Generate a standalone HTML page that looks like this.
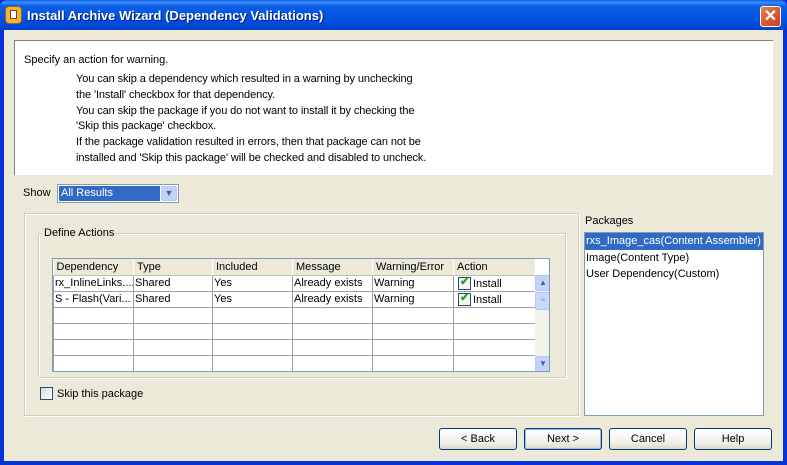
<!DOCTYPE html>
<html><head><style>
*{margin:0;padding:0;box-sizing:border-box}
body{width:787px;height:465px;position:relative;overflow:hidden;background:#0831d9;font-family:"Liberation Sans",Tahoma,sans-serif;font-size:11px;color:#000}
.a{position:absolute}
#title{left:0;top:0;width:787px;height:30px;background:linear-gradient(#0a5fe8 0%,#3d8cf7 8%,#0a5ee6 20%,#0253e0 60%,#0046d5 90%,#0341c8 100%);border-radius:7px 7px 0 0}
#body{left:4px;top:30px;width:779px;height:431px;background:#ece9d8}
.btn{position:absolute;top:428px;height:22px;width:78px;border:1px solid #003c74;border-radius:3px;background:linear-gradient(#fff,#f0efe8 70%,#dcd8c8);text-align:center;line-height:20px;font-size:11px}
.grp{border:1px solid #d0d0bf;box-shadow:1px 1px 0 #fff inset,1px 1px 0 #fff}
table{border-collapse:collapse;font-size:11px}
td{border:1px solid #a0a0a0;height:16px;padding:0 1px;white-space:nowrap;overflow:hidden}
th{font-weight:normal;text-align:left;padding:0 3px;height:16px;background:#ece9d8;border-right:1px solid #fff;border-bottom:1px solid #c5c2b2}
.cb{display:inline-block;width:13px;height:13px;border:1px solid #1c5180;background:#f4f4f0;vertical-align:-3px;margin:0 2px 0 3px;position:relative}
</style></head><body>
<div id="title" class="a"></div>
<div class="a" style="left:5px;top:6px;width:17px;height:18px;border-radius:4px;background:#f3b23a;border:1px solid #a06010"><div style="margin:3px 4px;width:7px;height:9px;background:#fff;border:1px solid #6a4a20"></div></div>
<div class="a" style="left:27px;top:8px;color:#fff;font-weight:bold;font-size:13px;text-shadow:1px 1px 0 #0a1a80">Install Archive Wizard (Dependency Validations)</div>
<div class="a" style="left:760px;top:6px;width:21px;height:21px;border:1px solid #fff;border-radius:3px;background:linear-gradient(135deg,#e97a50,#c9401a);color:#fff;font-weight:bold;font-size:16px;text-align:center;line-height:19px">✕</div>
<div id="body" class="a"></div>
<div class="a" style="left:14px;top:40px;width:759px;height:135px;background:#fff;border-top:1px solid #808080;border-left:1px solid #808080"></div>
<div class="a" style="left:24px;top:54px">Specify an action for warning.</div>
<div class="a" style="left:76px;top:72px;line-height:15.8px;letter-spacing:-0.1px">You can skip a dependency which resulted in a warning by unchecking<br>the 'Install' checkbox for that dependency.<br>You can skip the package if you do not want to install it by checking the<br>'Skip this package' checkbox.<br>If the package validation resulted in errors, then that package can not be<br>installed and 'Skip this package' will be checked and disabled to uncheck.</div>
<div class="a" style="left:23px;top:187px">Show</div>
<div class="a" style="left:57px;top:184px;width:122px;height:19px;border:1px solid #7f9db9;background:#fff"><div style="position:absolute;left:1px;top:1px;width:101px;height:15px;background:#316ac5;color:#fff;padding-left:2px;line-height:15px">All Results</div><div style="position:absolute;right:1px;top:1px;width:16px;height:15px;background:#c1d3fb;border:1px solid #b3c8f5;border-radius:2px;color:#4d6185;font-size:9px;text-align:center;line-height:13px">▼</div></div>
<div class="a grp" style="left:24px;top:213px;width:555px;height:203px"></div>
<div class="a grp" style="left:38px;top:233px;width:528px;height:145px"></div>
<div class="a" style="left:42px;top:227px;background:#ece9d8;padding:0 2px">Define Actions</div>
<div class="a" style="left:52px;top:258px;width:498px;height:114px;border:1px solid #7f9db9;background:#fff;overflow:hidden">
<table style="width:482px;table-layout:fixed">
<col style="width:80px"><col style="width:79px"><col style="width:80px"><col style="width:80px"><col style="width:81px"><col style="width:82px">
<tr><th>Dependency</th><th>Type</th><th>Included</th><th>Message</th><th>Warning/Error</th><th>Action</th></tr>
<tr><td>rx_InlineLinks....</td><td>Shared</td><td>Yes</td><td>Already exists</td><td>Warning</td><td><span class="cb"><span style="position:absolute;left:1px;top:-3px;color:#21a121;font-size:11px;font-weight:bold">✔</span></span>Install</td></tr>
<tr><td>S - Flash(Vari...</td><td>Shared</td><td>Yes</td><td>Already exists</td><td>Warning</td><td><span class="cb"><span style="position:absolute;left:1px;top:-3px;color:#21a121;font-size:11px;font-weight:bold">✔</span></span>Install</td></tr>
<tr><td></td><td></td><td></td><td></td><td></td><td></td></tr>
<tr><td></td><td></td><td></td><td></td><td></td><td></td></tr>
<tr><td></td><td></td><td></td><td></td><td></td><td></td></tr>
<tr><td></td><td></td><td></td><td></td><td></td><td></td></tr>
</table>
<div style="position:absolute;left:482px;top:16px;width:16px;height:97px;background:#f3f1ec">
<div style="height:16px;background:#c1d3fb;border:1px solid #b3c8f5;border-radius:2px;font-size:8px;color:#4d6185;text-align:center;line-height:14px">▲</div>
<div style="height:18px;margin-top:1px;background:#c8d7fb;border:1px solid #b3c8f5;border-radius:2px;font-size:8px;color:#8aa0d0;text-align:center;line-height:14px">≡</div>
<div style="position:absolute;bottom:0;width:16px;height:16px;background:#c1d3fb;border:1px solid #b3c8f5;border-radius:2px;font-size:8px;color:#4d6185;text-align:center;line-height:14px">▼</div>
</div></div>
<div class="a" style="left:40px;top:387px;width:13px;height:13px;border:1px solid #1c5180;background:linear-gradient(135deg,#dcdcd6,#fff)"></div>
<div class="a" style="left:57px;top:388px">Skip this package</div>
<div class="a" style="left:585px;top:215px">Packages</div>
<div class="a" style="left:584px;top:232px;width:180px;height:184px;border:1px solid #7f9db9;background:#fff">
<div style="height:17px;background:#316ac5;color:#fff;line-height:17px;padding-left:1px">rxs_Image_cas(Content Assembler)</div>
<div style="height:16px;line-height:16px;padding-left:1px">Image(Content Type)</div>
<div style="height:16px;line-height:16px;padding-left:1px">User Dependency(Custom)</div>
</div>
<div class="btn" style="left:439px">&lt; Back</div>
<div class="btn" style="left:524px;box-shadow:0 0 0 1px #9bb8f0 inset">Next &gt;</div>
<div class="btn" style="left:609px">Cancel</div>
<div class="btn" style="left:694px">Help</div>
</body></html>
